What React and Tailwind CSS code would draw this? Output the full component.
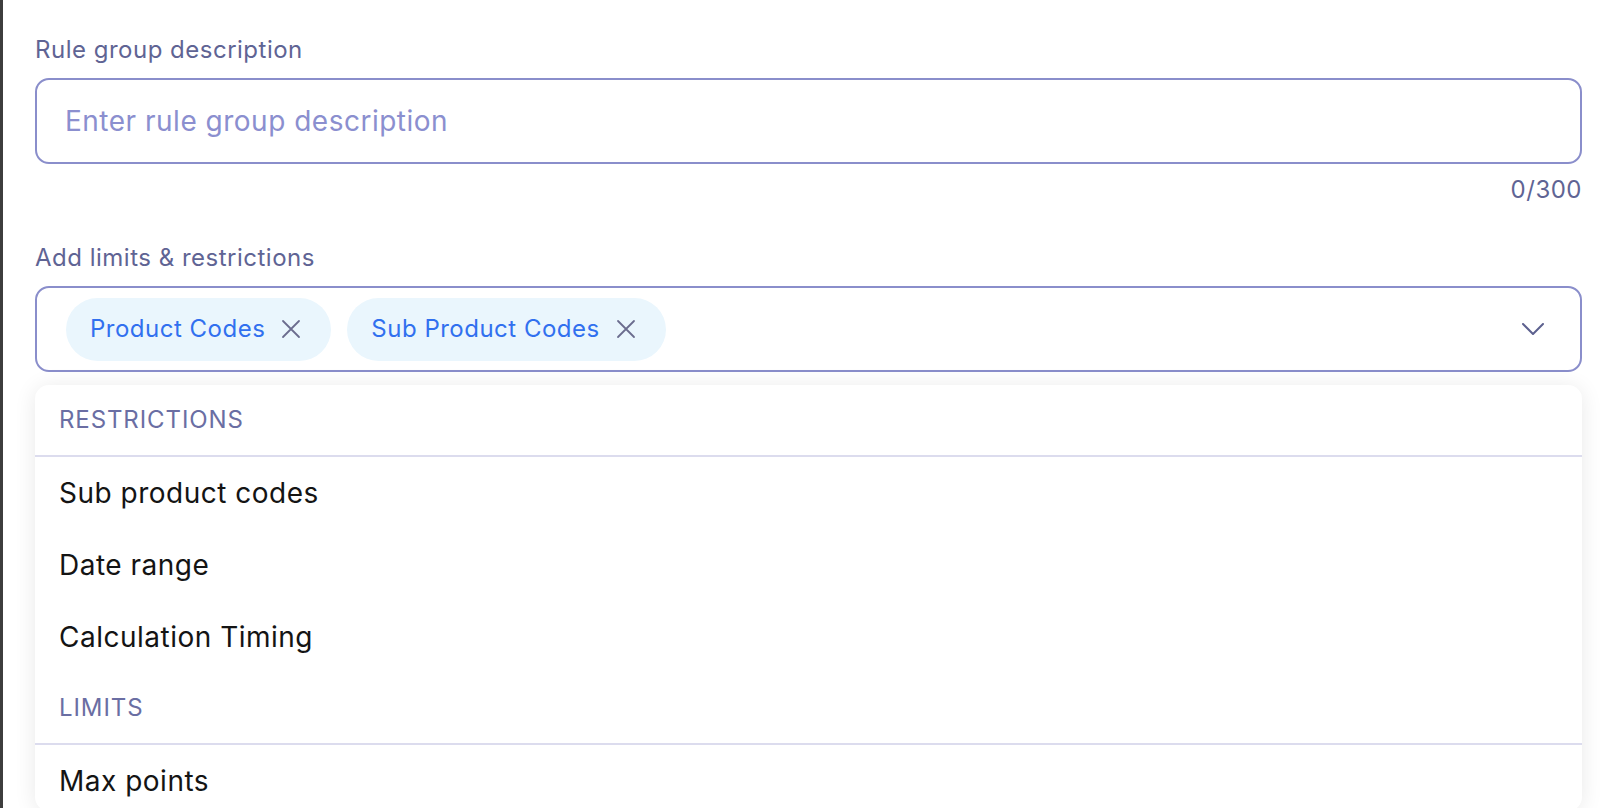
import React from 'react';

const chips = ['Product Codes', 'Sub Product Codes'];

const groups = [
  { title: 'RESTRICTIONS', items: ['Sub product codes', 'Date range', 'Calculation Timing'] },
  { title: 'LIMITS', items: ['Max points'] },
];

const XIcon = () => (
  <svg width="20" height="20" viewBox="0 0 20 20" fill="none" stroke="#6b6c8e" strokeWidth="1.8" strokeLinecap="round">
    <path d="M2 2 18 18M18 2 2 18" />
  </svg>
);

const Chevron = () => (
  <svg width="22" height="12" viewBox="0 0 22 12" fill="none" stroke="#5d618f" strokeWidth="2" strokeLinecap="round" strokeLinejoin="round">
    <path d="M1 1l10 10L21 1" />
  </svg>
);

export default function App() {
  return (
    <div className="flex h-[808px] overflow-hidden bg-white" style={{ fontFamily: 'Inter, "Noto Sans", sans-serif' }}>
      <div className="w-[3px] shrink-0 bg-[#3d3d3d]" />

      <div className="flex-1 px-8 pt-[34px] tracking-[0.5px]">
        {/* ── Description ── */}
        <label className="block text-[24px] leading-[32px] text-[#5f6494]">Rule group description</label>
        <div className="mt-3 flex h-[86px] items-center rounded-[14px] border-2 border-[#8a8ecb] px-[28px]">
          <span className="text-[28px] text-[#8b8fcf]">Enter rule group description</span>
        </div>
        <div className="mt-[10px] text-right text-[24px] leading-[32px] text-[#5f6494]">0/300</div>

        {/* ── Limits select ── */}
        <label className="mt-9 block text-[24px] leading-[32px] text-[#5f6494]">Add limits &amp; restrictions</label>
        <div className="mt-3 flex h-[86px] items-center rounded-[14px] border-2 border-[#8a8ecb] pl-[29px] pr-[36px]">
          <div className="flex flex-1 gap-4">
            {chips.map((c) => (
              <div key={c} className="flex h-[63px] items-center gap-4 rounded-full bg-[#eaf6fd] pl-6 pr-[30px]">
                <span className="text-[24px] text-[#3170ef]">{c}</span>
                <XIcon />
              </div>
            ))}
          </div>
          <Chevron />
        </div>

        {/* ── Dropdown ── */}
        <div className="mt-[13px] h-[426px] overflow-hidden rounded-[14px] bg-white shadow-[0_2px_22px_rgba(0,0,0,0.09)]">
          {groups.map((g) => (
            <div key={g.title}>
              <div className="flex h-[72px] items-center border-b-2 border-[#dcdcee] px-6 text-[24px] tracking-[0.9px] text-[#6a6ea3]">
                {g.title}
              </div>
              {g.items.map((it) => (
                <div key={it} className="flex h-[72px] items-center px-6 text-[28px] text-[#141414]">
                  {it}
                </div>
              ))}
            </div>
          ))}
        </div>
      </div>
    </div>
  );
}
